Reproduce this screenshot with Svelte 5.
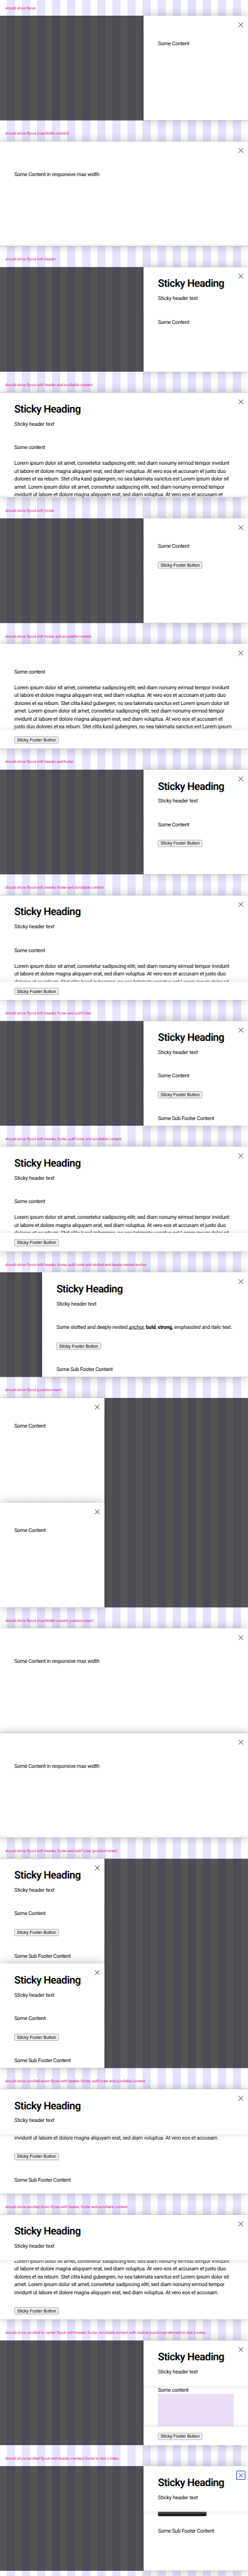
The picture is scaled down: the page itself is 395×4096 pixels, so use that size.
<script>
  const lorem = [
    'Lorem ipsum dolor sit amet, consetetur sadipscing elitr, sed diam nonumy eirmod tempor invidunt',
    'ut labore et dolore magna aliquyam erat, sed diam voluptua. At vero eos et accusam et justo duo',
    'dolores et ea rebum. Stet clita kasd gubergren, no sea takimata sanctus est Lorem ipsum dolor sit',
    'amet. Lorem ipsum dolor sit amet, consetetur sadipscing elitr, sed diam nonumy eirmod tempor',
    'invidunt ut labore et dolore magna aliquyam erat, sed diam voluptua. At vero eos et accusam et',
    'justo duo dolores et ea rebum. Stet clita kasd gubergren, no sea takimata sanctus est Lorem ipsum'
  ];
  const tail = 'invidunt ut labore et dolore magna aliquyam erat, sed diam voluptua. At vero eos et accusam.';
  const scroll = (count) => ['Some content', '', ...lorem.slice(0, count)];

  const stories = [
    { label: 'should show flyout', lines: ['Some Content'] },
    { label: 'should show flyout (maxWidth content)', size: 'full', offset: true, fade: true, lines: ['Some Content in responsive max width'] },
    { label: 'should show flyout with header', header: true, lines: ['Some Content'] },
    { label: 'should show flyout with header and scrollable content', size: 'full', header: true, fade: true, lines: scroll(5) },
    { label: 'should show flyout with footer', footer: true, lines: ['Some Content'] },
    { label: 'should show flyout with footer and scrollable content', size: 'full', footer: true, stuck: true, lines: scroll(6) },
    { label: 'should show flyout with header and footer', header: true, footer: true, lines: ['Some Content'] },
    { label: 'should show flyout with header, footer and scrollable content', size: 'full', header: true, footer: true, stuck: true, lines: scroll(3) },
    { label: 'should show flyout with header, footer and subFooter', header: true, footer: true, sub: true, lines: ['Some Content'] },
    { label: 'should show flyout with header, footer, subFooter and scrollable content', size: 'full', header: true, footer: true, stuck: true, lines: scroll(3) },
    { label: 'should show flyout with header, footer, subFooter and slotted and deeply nested anchor', size: 'wide', header: true, footer: true, sub: true, rich: true, lines: [] },
    { label: 'should show flyout (position=start)', start: true, count: 2, lines: ['Some Content'] },
    { label: 'should show flyout (maxWidth content, position=start)', size: 'full', start: true, count: 2, offset: true, fade: true, lines: ['Some Content in responsive max width'] },
    { label: 'should show flyout with header, footer and subFooter (position=start)', start: true, count: 2, header: true, footer: true, sub: true, lines: ['Some Content'] },
    { label: 'should show scrolled down flyout with header, footer, subFooter and scrollable content', size: 'full', header: true, footer: true, sub: true, scrolled: true, shift: -2.5, lines: [tail] },
    { label: 'should show scrolled down flyout with header, footer and scrollable content', size: 'full', header: true, footer: true, scrolled: true, shift: -10.5, lines: [...lorem.slice(0, 4), tail] },
    { label: 'should show scrolled to center flyout with header, footer, scrollable content with relative positioned element to test z-index', header: true, footer: true, stuck: true, scrolled: true, shift: 0, box: true, lines: ['Some content'] },
    { label: 'should show scrolled flyout until header overlaps footer to test z-index', header: true, bar: true, sub: true, scrolled: true, focus: true, lines: [] }
  ];
</script>

{#snippet panel(s)}
  <article class="flyout {s.size ?? 'normal'}" class:fade={s.fade}>
    <header class:tall={s.header} class:raised={s.scrolled}>
      {#if s.header}
        <h2>Sticky Heading</h2>
        <p class="lead">Sticky header text</p>
      {/if}
      <span class="close" class:focus={s.focus}>
        <svg viewBox="0 0 24 24"><path d="M5 5 19 19M19 5 5 19" /></svg>
      </span>
    </header>
    {#if s.bar}
      <div class="bar"></div>
    {:else}
      <div class="content" class:scrolled={s.scrolled} class:offset={s.offset}>
        <div style:margin-top="{s.shift ?? 0}px">
          {#if s.rich}
            <p class="rich">Some slotted and deeply nested <u>anchor</u>, <b>bold</b>, <strong>strong</strong>, <em>emphasized</em> and <i>italic</i> text.</p>
          {/if}
          {#each s.lines as line}
            <p class:long={line.length > 40}>{line}</p>
          {/each}
          {#if s.box}<div class="box"></div>{/if}
        </div>
      </div>
    {/if}
    {#if s.footer}
      <footer class:stuck={s.stuck}><button>Sticky Footer Button</button></footer>
    {/if}
    {#if s.sub}<div class="sub">Some Sub Footer Content</div>{/if}
  </article>
{/snippet}

<div class="viewport">
  <main>
    {#each stories as s}
      <section>
        <div class="label" class:short={s.label.length < 25} class:extended={s.label.length > 100}>{s.label}</div>
        <div class="stage" class:start={s.start}>
          {#each Array(s.count ?? 1) as _}
            {@render panel(s)}
          {/each}
        </div>
      </section>
    {/each}
  </main>
</div>

<style>
  :global(body) {
    margin: 0;
    background: #fff;
  }
  .viewport {
    width: 395px;
    height: 4096px;
    overflow: hidden;
  }
  main {
    transform: scale(0.51974, 0.52033);
    transform-origin: 0 0;
    width: 760px;
    height: 7872px;
    overflow: hidden;
    font-family: Roboto, sans-serif;
    font-size: 16px;
    line-height: 24px;
    letter-spacing: -0.45px;
    text-rendering: geometricPrecision;
    color: #010205;
    background: repeating-linear-gradient(90deg, #e4e4ff 0 24.9px, #fff 24.9px 46.14px) -24.2px 0 / 830px 100%;
  }
  section {
    padding-top: 32px;
  }
  section:first-child {
    padding-top: 16px;
  }
  .label {
    height: 16px;
    margin-bottom: 16px;
    padding-left: 16px;
    font-size: 12px;
    line-height: 17px;
    letter-spacing: -0.36px;
    white-space: nowrap;
    color: #f01c9d;
  }
  .label.short {
    letter-spacing: -0.44px;
  }
  .label.extended {
    letter-spacing: -0.276px;
  }
  .stage {
    display: flex;
    flex-direction: column;
    align-items: flex-end;
    background: rgba(1, 2, 5, 0.67);
  }
  .stage.start {
    align-items: flex-start;
  }
  .flyout {
    position: relative;
    display: flex;
    flex-direction: column;
    height: 320px;
    overflow: hidden;
    background: #fff;
    box-shadow: 0 0 30px rgba(0, 0, 0, 0.28);
  }
  .normal {
    width: 320px;
  }
  .wide {
    width: 631px;
  }
  .full {
    width: 100%;
  }
  .fade::after {
    content: '';
    position: absolute;
    inset: auto 0 0;
    height: 9px;
    background: linear-gradient(rgba(204, 204, 204, 0), rgba(204, 204, 204, 0.35));
  }
  header {
    position: relative;
    z-index: 1;
    flex: none;
    box-sizing: border-box;
    height: 56px;
    padding: 30px 44px 0;
    background: #fff;
  }
  header.tall {
    height: 139px;
  }
  .raised {
    box-shadow: 0 5px 10px rgba(204, 204, 204, 0.35);
  }
  h2 {
    margin: 0 0 14px;
    font-size: 32px;
    line-height: 40px;
    font-weight: 600;
    letter-spacing: -0.89px;
    white-space: nowrap;
  }
  p {
    margin: 0;
    min-height: 24px;
    white-space: nowrap;
  }
  .lead {
    letter-spacing: -0.22px;
  }
  .long {
    letter-spacing: -0.37px;
  }
  .rich {
    letter-spacing: -0.34px;
  }
  .close {
    position: absolute;
    top: 14px;
    right: 8px;
    box-sizing: border-box;
    width: 28px;
    height: 28px;
    padding: 2px;
    border-radius: 4px;
  }
  .focus {
    padding: 0;
    border: 2px solid #1a44ea;
  }
  svg {
    display: block;
    width: 24px;
    height: 24px;
    fill: none;
    stroke: #010205;
    stroke-width: 1.5;
  }
  .content {
    flex: 0 1 auto;
    min-height: 0;
    overflow: hidden;
    padding: 17px 44px 16px;
  }
  .content.offset {
    padding-top: 33px;
  }
  .content.scrolled {
    padding-top: 0;
  }
  .box {
    height: 200px;
    background: #ebdcf8;
  }
  .bar {
    flex: none;
    width: 149px;
    height: 13.5px;
    margin-left: 44px;
    border-radius: 0 0 4px 4px;
    background: linear-gradient(#36383b, #010205);
  }
  footer {
    position: relative;
    flex: none;
    box-sizing: border-box;
    display: flex;
    height: 56px;
    padding: 19px 44px 0;
    background: #fff;
  }
  footer.stuck {
    box-shadow: 0 -5px 10px rgba(204, 204, 204, 0.35);
  }
  button {
    box-sizing: border-box;
    width: 136px;
    height: 21px;
    padding: 0;
    border: 1px solid #767676;
    border-radius: 3px;
    background: #efefef;
    font: 13.333px/18px 'Liberation Sans', Arial, sans-serif;
    letter-spacing: 0;
    color: #000;
    white-space: nowrap;
  }
  .sub {
    padding: 33px 44px 0;
    white-space: nowrap;
  }
</style>
